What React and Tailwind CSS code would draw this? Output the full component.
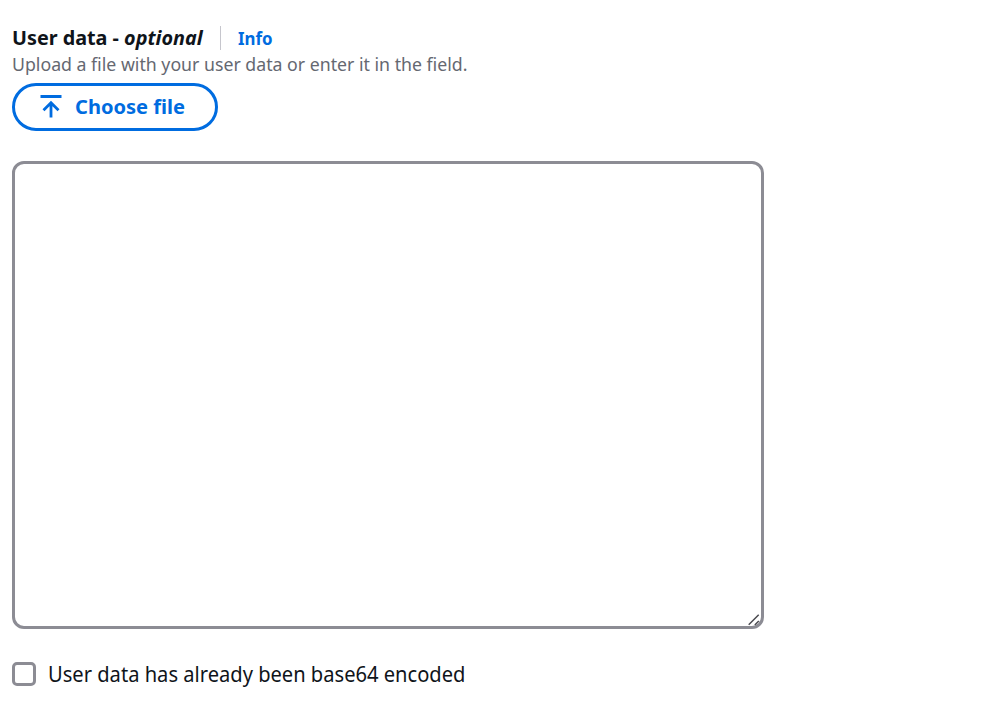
export default function App() {
  return (
    <main className="flex h-[712px] w-[999px] flex-col bg-white pl-3 font-['Noto_Sans',sans-serif] text-[#0f141a]">
      <div className="mt-[24px] flex h-7 items-center whitespace-nowrap">
        <h1 className="w-[191px] text-[20px] leading-7 font-bold">
          <span className="inline-block origin-left scale-x-[0.989]">User data - <em>optional</em></span>
        </h1>
        <span className="ml-[17px] h-6 w-px bg-[#c6c6cd]" />
        <a className="ml-[17px] text-[18px] font-bold text-[#006ce0]">
          <span className="inline-block origin-left scale-x-[0.935]">Info</span>
        </a>
      </div>
      <p className="-mt-px h-8 text-[18px] leading-[26px] whitespace-nowrap text-[#656871]">
        <span className="inline-block origin-left scale-x-[0.984]">Upload a file with your user data or enter it in the field.</span>
      </p>
      <button className="flex h-[48px] w-[206px] items-center rounded-full border-[3px] border-[#006ce0] pl-[25px] text-[20px] font-bold whitespace-nowrap text-[#006ce0]">
        <svg className="mr-[13px] h-6 w-[22px] shrink-0" viewBox="0 0 22 24" fill="none" stroke="currentColor" strokeWidth="2.8">
          <path d="M.5 1.5h21M11 22.5V8M3.5 15.3 11 7.8l7.5 7.5" />
        </svg>
        <span className="inline-block origin-left scale-x-[1.004]">Choose file</span>
      </button>
      <div className="relative mt-[30px] h-[468px] w-[752px] shrink-0">
        <textarea className="block h-full w-full resize-none rounded-xl border-[3px] border-[#8c8c94] bg-white outline-none" />
        <svg className="pointer-events-none absolute right-1 bottom-[3px] h-3 w-3" viewBox="0 0 12 12" fill="none" stroke="#4a4a50" strokeWidth="1.5">
          <path d="M.7 10.8 10.7 .8M6.8 11l4-4" />
        </svg>
      </div>
      <label className="mt-[31px] flex h-7 items-center whitespace-nowrap">
        <span className="mr-3 h-6 w-6 rounded-[5px] border-[3px] border-[#8c8c94]" />
        <span className="inline-block origin-left scale-x-[0.958] pt-px text-[21px]">User data has already been base64 encoded</span>
      </label>
    </main>
  );
}
